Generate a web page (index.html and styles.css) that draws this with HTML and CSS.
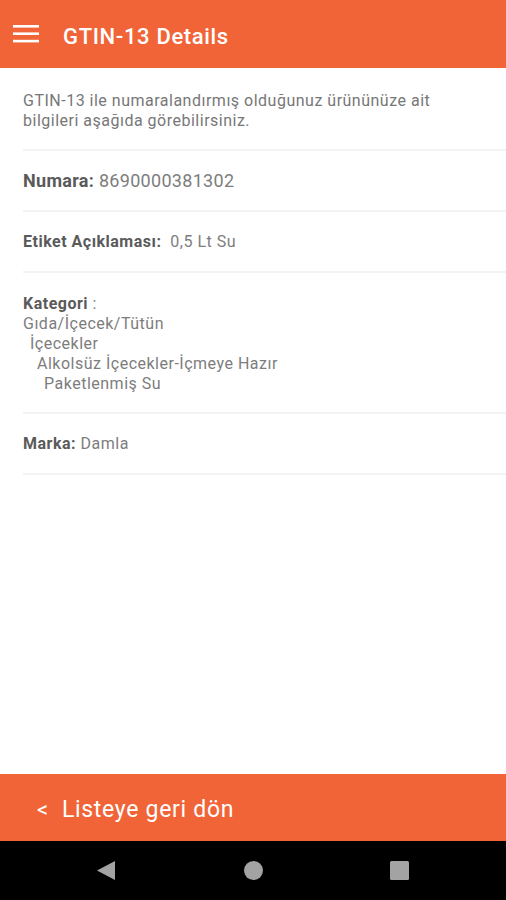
FILE: index.html
```html
<!DOCTYPE html>
<html lang="tr">
<head>
    <meta charset="UTF-8">
    <meta name="viewport" content="width=device-width, initial-scale=1.0">
    <title>GTIN-13 Details</title>
    <link rel="stylesheet" href="styles.css">
</head>
<body>
    <div class="appbar">
        <svg class="menu-icon" width="26" height="18" viewBox="0 0 26 18">
            <rect x="0" y="0" width="26" height="2.6" fill="#fff"/>
            <rect x="0" y="7.4" width="26" height="2.6" fill="#fff"/>
            <rect x="0" y="14.8" width="26" height="2.6" fill="#fff"/>
        </svg>
        <h1>GTIN-13 Details</h1>
    </div>

    <div class="content">
        <p class="intro">GTIN-13 ile numaralandırmış olduğunuz ürününüze ait bilgileri aşağıda görebilirsiniz.</p>

        <div class="row big">
            <p><span class="label">Numara:</span> <span class="value">8690000381302</span></p>
        </div>
        <div class="row">
            <p><span class="label">Etiket Açıklaması:</span>&nbsp; <span class="value">0,5 Lt Su</span></p>
        </div>
        <div class="row category">
            <div><span class="label">Kategori</span> <span class="value">:</span></div>
            <div class="value">Gıda/İçecek/Tütün</div>
            <div class="value level-1">İçecekler</div>
            <div class="value level-2">Alkolsüz İçecekler-İçmeye Hazır</div>
            <div class="value level-3">Paketlenmiş Su</div>
        </div>
        <div class="row">
            <p><span class="label">Marka:</span> <span class="value">Damla</span></p>
        </div>
    </div>

    <div class="back-bar">
        <span class="back-arrow">&lt;</span>
        <span>Listeye geri dön</span>
    </div>

    <div class="navbar">
        <svg width="19" height="19" viewBox="0 0 19 19"><polygon points="18,0 18,19 0,9.5" fill="#a3a3a3"/></svg>
        <svg width="19" height="19" viewBox="0 0 19 19"><circle cx="9.5" cy="9.5" r="9.5" fill="#a3a3a3"/></svg>
        <svg width="19" height="19" viewBox="0 0 19 19"><rect width="19" height="19" rx="1.5" fill="#a3a3a3"/></svg>
    </div>
</body>
</html>
```

FILE: styles.css
```css
html, body {
    margin: 0;
    height: 100%;
}

body {
    font-family: Roboto, "Noto Sans", Arial, sans-serif;
    display: flex;
    flex-direction: column;
    background-color: #fff;
}

.appbar {
    background-color: #f16438;
    color: #fff;
    height: 68px;
    display: flex;
    align-items: center;
    padding-left: 13px;
    flex-shrink: 0;
}

.appbar h1 {
    font-size: 22px;
    font-weight: 500;
    letter-spacing: 0.65px;
    margin: 4px 0 0 24px;
}

.content {
    flex: 1;
}

.intro {
    margin: 0 0 0 23px;
    padding: 23px 30px 18px 0;
    font-size: 16px;
    letter-spacing: 0.5px;
    line-height: 20px;
    color: #777;
    border-bottom: 2px solid #f3f3f3;
}

.row {
    margin-left: 23px;
    height: 59px;
    display: flex;
    align-items: center;
    font-size: 16px;
    letter-spacing: 0.5px;
    border-bottom: 2px solid #f3f3f3;
}

.row p {
    margin: 0;
}

.label {
    font-weight: 700;
    color: #5a5a5a;
}

.value {
    color: #7d7d7d;
}

.big {
    font-size: 18px;
    letter-spacing: 0.3px;
}

.category {
    display: block;
    height: auto;
    padding: 21px 0 18px 0;
    line-height: 20px;
}

.level-1 { padding-left: 7px; }
.level-2 { padding-left: 14px; }
.level-3 { padding-left: 21px; }

.back-bar {
    background-color: #f16438;
    color: #fff;
    height: 64px;
    padding: 3px 0 0 37px;
    display: flex;
    align-items: center;
    font-size: 23px;
    letter-spacing: 0.7px;
    flex-shrink: 0;
}

.back-arrow {
    font-size: 22px;
    margin-right: 13px;
}

.navbar {
    background-color: #000;
    height: 59px;
    display: flex;
    align-items: center;
    justify-content: space-between;
    padding: 0 97px;
    flex-shrink: 0;
}
```
